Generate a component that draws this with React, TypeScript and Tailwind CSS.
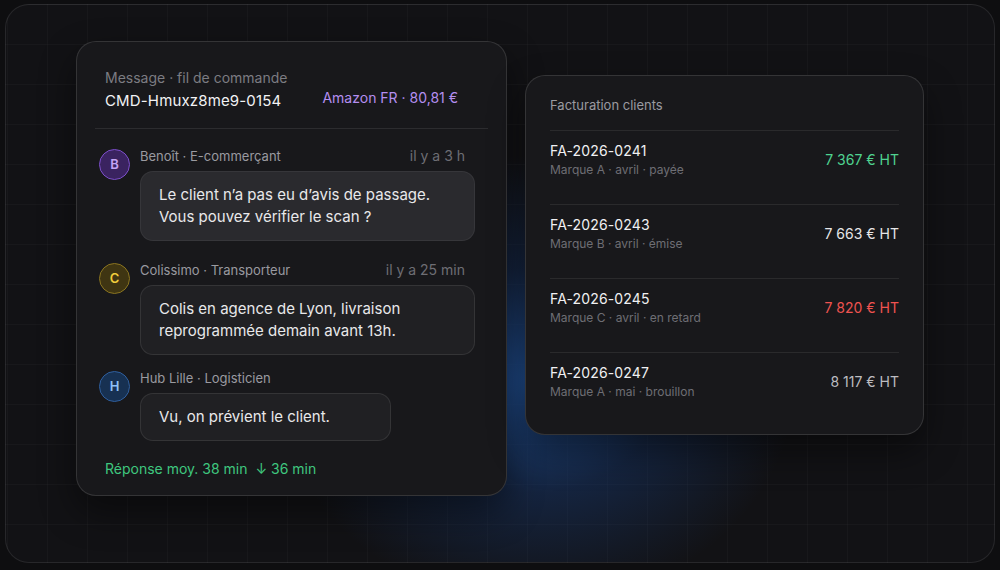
import React from "react";

const font = { fontFamily: "Inter, 'Noto Sans', sans-serif" };

type Msg = {
  initial: string;
  name: string;
  time?: string;
  lines: string[];
  avatar: string;
  bubble: string;
  bubbleW: string;
  gap: string;
};

const msgs: Msg[] = [
  {
    initial: "B",
    name: "Benoît · E-commerçant",
    time: "il y a 3 h",
    lines: ["Le client n’a pas eu d’avis de passage.", "Vous pouvez vérifier le scan ?"],
    avatar: "border-[#7c4fc9] bg-[#3a2360] text-[#c4a4f5]",
    bubble: "bg-[#2a2a2e] border-white/[0.06]",
    bubbleW: "w-[335px]",
    gap: "mb-[21px]",
  },
  {
    initial: "C",
    name: "Colissimo · Transporteur",
    time: "il y a 25 min",
    lines: ["Colis en agence de Lyon, livraison", "reprogrammée demain avant 13h."],
    avatar: "border-[#8a7420] bg-[#3f3512] text-[#f0cc3c]",
    bubble: "bg-[#202023] border-white/[0.09]",
    bubbleW: "w-[335px]",
    gap: "mb-[15px]",
  },
  {
    initial: "H",
    name: "Hub Lille · Logisticien",
    lines: ["Vu, on prévient le client."],
    avatar: "border-[#2f5f9e] bg-[#173152] text-[#8fc0f5]",
    bubble: "bg-[#202023] border-white/[0.09]",
    bubbleW: "w-[251px]",
    gap: "mb-0",
  },
];

const invoices = [
  { id: "FA-2026-0241", sub: "Marque A · avril · payée", amt: "7 367 € HT", c: "text-[#4fd390]" },
  { id: "FA-2026-0243", sub: "Marque B · avril · émise", amt: "7 663 € HT", c: "text-[#e6e6e8]" },
  { id: "FA-2026-0245", sub: "Marque C · avril · en retard", amt: "7 820 € HT", c: "text-[#ef5350]" },
  { id: "FA-2026-0247", sub: "Marque A · mai · brouillon", amt: "8 117 € HT", c: "text-[#bdbdc1]" },
];

export default function App() {
  return (
    <div style={font} className="w-[1000px] h-[570px] bg-[#0e0e10] p-[4px_5px_7px_5px] overflow-hidden">
      <div className="relative w-full h-full rounded-[24px] border border-white/[0.09] bg-[#121215] overflow-hidden bg-[linear-gradient(rgba(255,255,255,0.025)_1px,transparent_1px),linear-gradient(90deg,rgba(255,255,255,0.025)_1px,transparent_1px)] bg-[size:40px_40px] bg-[position:1px_-1px]">
        <div className="pointer-events-none absolute left-[270px] top-[150px] w-[520px] h-[450px] rounded-full bg-[radial-gradient(closest-side,rgba(34,88,165,0.85),rgba(24,60,120,0.42)_50%,transparent)]" />
        <div className="relative flex items-start gap-[18px] pl-[70px] pt-[36px]">
          {/* Left card */}
          <div className="w-[431px] h-[455px] rounded-[20px] border border-white/[0.12] bg-[#18181b] shadow-[0_16px_36px_rgba(0,0,0,0.45)] flex flex-col">
            <div className="px-[28px] pt-[27px] pb-[17px] flex items-end justify-between">
              <div>
                <div className="text-[14px] leading-[18px] text-[#7c7c82]">Message · fil de commande</div>
                <div className="mt-[4px] text-[15px] leading-[20px] text-[#f2f2f4] tracking-[0.01em]">CMD-Hmuxz8me9-0154</div>
              </div>
              <div className="mr-[20px] mb-[4px] text-[14px] leading-[18px] text-[#b48ef0]">Amazon FR · 80,81 €</div>
            </div>
            <div className="mx-[18px] h-px bg-white/[0.09]" />
            <div className="flex flex-col pl-[22px] pr-[30px] pt-[19px]">
              {msgs.map((m) => (
                <div key={m.name} className={`flex gap-[10px] ${m.gap}`}>
                  <div
                    className={`mt-[1px] w-[31px] h-[31px] shrink-0 rounded-full border flex items-center justify-center text-[13px] font-semibold ${m.avatar}`}
                  >
                    {m.initial}
                  </div>
                  <div className="flex flex-col">
                    <div className="flex justify-between items-center text-[13px] leading-[16px] text-[#9a9aa0] pr-[10px]">
                      <span>{m.name}</span>
                      {m.time && <span className="text-[#6e6e74] text-[14px]">{m.time}</span>}
                    </div>
                    <div
                      className={`mt-[7px] rounded-[13px] border px-[18px] py-[12px] text-[15px] leading-[22px] text-[#e8e8ea] ${m.bubble} ${m.bubbleW}`}
                    >
                      {m.lines.map((l) => (
                        <div key={l}>{l}</div>
                      ))}
                    </div>
                  </div>
                </div>
              ))}
            </div>
            <div className="mt-[19px] px-[28px] text-[14px] leading-[18px] text-[#3fc77f]">
              Réponse moy. 38 min <span className="ml-[4px]">↓ 36 min</span>
            </div>
          </div>

          {/* Right card */}
          <div className="mt-[34px] w-[399px] h-[360px] rounded-[20px] border border-white/[0.12] bg-[#18181b] shadow-[0_16px_36px_rgba(0,0,0,0.45)] px-[24px] pt-[20px]">
            <div className="text-[13px] leading-[18px] text-[#9a9aa0] pb-[16px]">Facturation clients</div>
            {invoices.map((r) => (
              <div key={r.id} className="border-t border-white/[0.08] h-[74px] flex items-center justify-between">
                <div className="-mt-[16px]">
                  <div className="text-[14px] leading-[18px] text-[#f0f0f2] tracking-[0.01em]">{r.id}</div>
                  <div className="mt-[2px] text-[12px] leading-[16px] text-[#6e6e74]">{r.sub}</div>
                </div>
                <div className={`-mt-[16px] text-[14px] ${r.c}`}>{r.amt}</div>
              </div>
            ))}
          </div>
        </div>
      </div>
    </div>
  );
}
